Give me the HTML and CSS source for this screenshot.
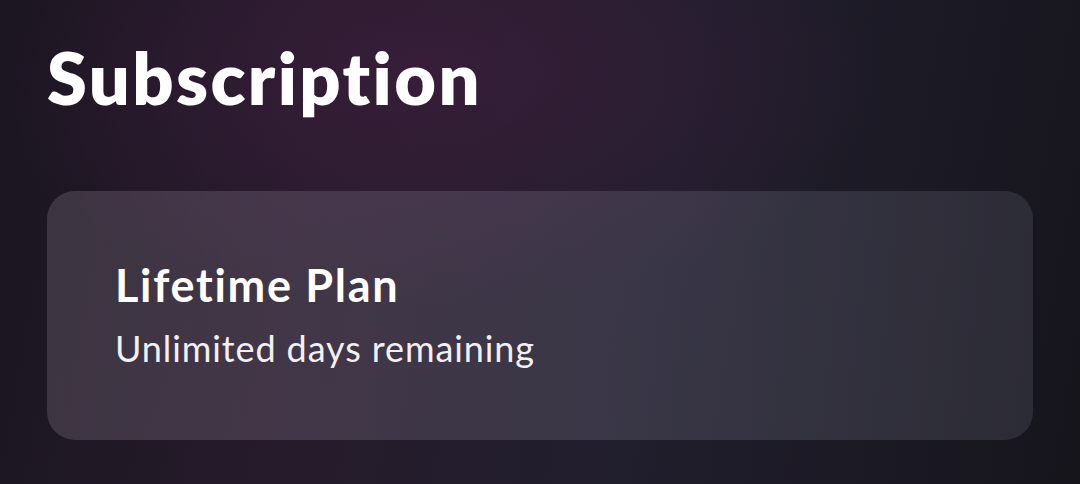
FILE: index.html
```html
<!DOCTYPE html>
<html lang="en">
<head>
    <meta charset="UTF-8">
    <meta name="viewport" content="width=device-width, initial-scale=1.0">
    <title>Subscription</title>
    <link rel="stylesheet" href="styles.css">
</head>
<body>

    <div class="screen">
        <h1 class="page-title">Subscription</h1>

        <div class="plan-card">
            <h2 class="plan-name">Lifetime Plan</h2>
            <p class="plan-remaining">Unlimited days remaining</p>
        </div>
    </div>

</body>
</html>
```

FILE: styles.css
```css
html, body {
    height: 100%;
}
body {
    margin: 0;
    font-family: "Lato", "Noto Sans", sans-serif;
    font-variant-ligatures: none;
    color: #fff;
    background-color: #1c1a24;
    background-image:
        radial-gradient(ellipse 60% 70% at 40% 15%, rgba(62, 30, 62, 0.7), rgba(62, 30, 62, 0) 70%),
        linear-gradient(100deg, #1a1520 0%, #261b2b 30%, #211e2d 60%, #16151c 100%);
    overflow: hidden;
}
.screen {
    padding: 34px 47px 0;
}
.page-title {
    margin: 0;
    font-size: 72px;
    font-weight: 800;
    line-height: 1.2;
    letter-spacing: 2.4px;
}
.plan-card {
    margin-top: 71px;
    height: 249px;
    box-sizing: border-box;
    padding: 67px 68px 0;
    border-radius: 28px;
    background: linear-gradient(90deg, rgba(255, 235, 255, 0.14), rgba(230, 230, 255, 0.12) 60%, rgba(220, 230, 255, 0.1));
}
.plan-name {
    margin: 0;
    font-size: 45px;
    font-weight: 700;
    line-height: 1.2;
    letter-spacing: 1.7px;
}
.plan-remaining {
    margin: 15px 0 0;
    font-size: 36px;
    font-weight: 400;
    line-height: 1.2;
    letter-spacing: 0.9px;
    color: #f2f0f4;
}
```
